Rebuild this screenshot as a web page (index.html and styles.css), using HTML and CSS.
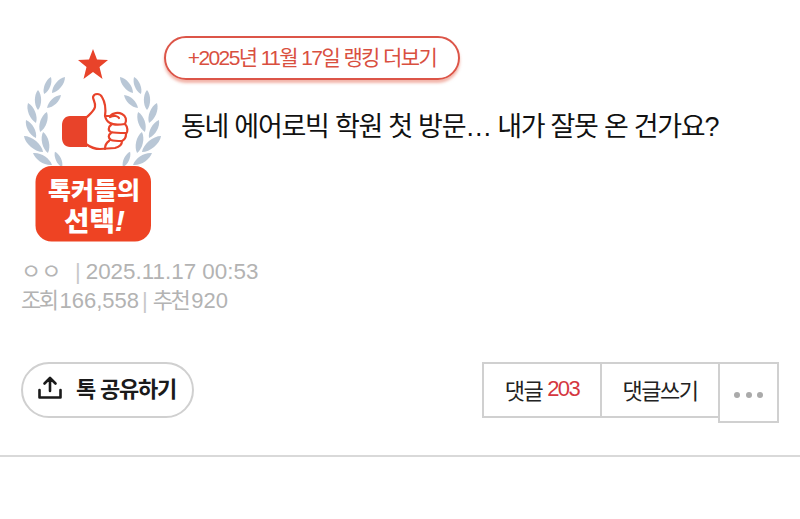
FILE: index.html
```html
<!DOCTYPE html>
<html lang="ko">
<head>
<meta charset="utf-8">
<title>동네 에어로빅 학원 첫 방문</title>
<link rel="stylesheet" href="styles.css">
</head>
<body>
<div class="page">
  <header class="head">
    <svg class="badge" viewBox="20 45 145 200" width="145" height="200">
      <defs>
        <path id="leaf" d="M0-1C.42-.5.42.5 0 1-.42.5-.42-.5 0-1Z"/>
        <g id="wreath" fill="#b9c7d6">
          <use href="#leaf" transform="translate(58.500 85) rotate(39) scale(10.300)"/>
          <use href="#leaf" transform="translate(47.500 85.500) rotate(22) scale(9.200)"/>
          <use href="#leaf" transform="translate(54 101.500) rotate(47) scale(9.500)"/>
          <use href="#leaf" transform="translate(38 100) scale(10)"/>
          <use href="#leaf" transform="translate(43.500 122) rotate(19) scale(10.500)"/>
          <use href="#leaf" transform="translate(32 113) rotate(-22) scale(10.700)"/>
          <use href="#leaf" transform="translate(45.500 142.500) rotate(-13) scale(10.800)"/>
          <use href="#leaf" transform="translate(31 129) rotate(-29) scale(10.300)"/>
          <use href="#leaf" transform="translate(33.500 144) rotate(-50) scale(12.500)"/>
          <use href="#leaf" transform="translate(42.500 159) rotate(-58) scale(11.200)"/>
          <use href="#leaf" transform="translate(58.500 159.500) rotate(-25) scale(8.500)"/>
        </g>
      </defs>
      <use href="#wreath"/>
      <use href="#wreath" transform="translate(185 0) scale(-1 1)"/>
      <polygon fill="#e8432a" points="93,49 97,59.500 108,60 99.500,67 102.500,79 93,72 83.500,79 86.500,67 78,60 89,59.500"/>
      <path fill="#e8432a" d="M87 116H70c-5 0-8 4-8 9v13c0 5 3 9 8 9h17z"/>
      <path fill="#fff" stroke="#e8432a" stroke-width="2.200" stroke-linejoin="round" d="M86 118C90 114 94 111 95 107 96 103 93 100 93 97 94 93 100 93 102 97 105 102 106 109 105 116H110C113 113 118 112 122 114 126 116 127 120 125 124 128 127 128 132 126 134 126 138 124 140 122 141 122 145 119 147 115 148L100 149C95 149 90 147 86 144Z"/>
      <path fill="none" stroke="#e8432a" stroke-width="2.200" stroke-linecap="round" d="M105 116C106 120 108 122 110 123 113 125 118 125 125 124M110 117C114 115 118 116 119 118M111 125C108 127 108 131 111 132 115 133 121 133 126 133M111 133C108 135 108 138 111 140 114 141 118 141 122 141M109 141C106 143 105 146 105 149"/>
      <rect x="35.500" y="166" width="115.500" height="75.500" rx="16" fill="#ee4323"/>
      <text class="badge-text" x="94" y="199" textLength="92" lengthAdjust="spacingAndGlyphs">톡커들의</text>
      <text class="badge-text badge-big" x="94.500" y="231" textLength="61" lengthAdjust="spacingAndGlyphs">선택<tspan class="bang">!</tspan></text>
    </svg>
    <div class="head-main">
      <a class="rank-pill">+2025년 11월 17일 랭킹 더보기</a>
      <h1 class="title">동네 에어로빅 학원 첫 방문… 내가 잘못 온 건가요?</h1>
    </div>
  </header>

  <section class="meta">
    <div class="meta-row"><span class="author">ㅇㅇ</span><span class="sep date-sep">|</span><span class="date">2025.11.17 00:53</span></div>
    <div class="meta-row"><span class="lbl">조회</span><span>166,558</span><span class="sep stat-sep">|</span><span class="lbl">추천</span><span>920</span></div>
  </section>

  <div class="actions">
    <button class="share">
      <svg class="share-icon" viewBox="0 0 26 26" width="26" height="26">
        <path d="M13 16V3.500M7.500 8.500 13 3l5.500 5.500M2.500 15v7.500h21V15" fill="none" stroke="#1a1a1a" stroke-width="2.600" stroke-linecap="round" stroke-linejoin="round"/>
      </svg>
      <span class="share-label">톡 공유하기</span>
    </button>
    <div class="btns">
      <a class="btn">댓글 <em>203</em></a>
      <a class="btn btn-write">댓글쓰기</a>
      <a class="btn-more"><i></i><i></i><i></i></a>
    </div>
  </div>
  <hr class="rule">
</div>
</body>
</html>
```

FILE: styles.css
```css
* { box-sizing: border-box; }
html, body { margin: 0; padding: 0; background: #fff; }
body {
  font-family: "Liberation Sans", "Noto Sans CJK KR", sans-serif;
  width: 800px;
  height: 519px;
  overflow: hidden;
}
.page { padding-top: 36px; }
.head { display: flex; height: 206px; padding-left: 20px; }
.badge { display: block; margin-top: 9px; flex: none; }
.badge-text {
  font-family: "Noto Sans CJK KR", sans-serif;
  font-weight: 900;
  font-size: 24px;
  fill: #fff;
  text-anchor: middle;
}
.badge-big { font-size: 27px; }
.bang { font-style: italic; font-size: 30px; font-family: "Liberation Sans", sans-serif; }
.head-main { margin-left: -1px; display: flex; flex-direction: column; align-items: flex-start; }
.rank-pill {
  display: flex;
  align-items: center;
  justify-content: center;
  width: 296px;
  height: 44px;
  padding-bottom: 5px;
  border: 2px solid #dc5548;
  border-radius: 22px;
  box-shadow: 0 3px 3px rgba(232, 120, 100, .55);
  color: #d9503f;
  font-size: 21px;
  letter-spacing: -1.600px;
  white-space: nowrap;
}
.title {
  margin: 28px 0 0 17px;
  font-size: 27px;
  font-weight: 400;
  line-height: 38px;
  letter-spacing: -1.270px;
  color: #111;
  white-space: nowrap;
}
.meta { padding-left: 21px; color: #b3b3b3; font-size: 22px; line-height: 29px; margin-top: 15px; }
.meta-row { display: flex; gap: 3px; white-space: nowrap; }
.author { color: #b5b5b5; width: 47px; }
.date-sep { margin-left: 4px; margin-right: 2px; }
.date { font-size: 22.400px; }
.sep { font-weight: 400; color: #c8c8c8; }
.stat-sep { margin-right: 2px; }
.lbl { letter-spacing: -2.500px; }
.actions { display: flex; justify-content: space-between; align-items: flex-start; margin-top: 47px; padding: 0 21px; }
.share {
  display: flex;
  align-items: center;
  gap: 13px;
  width: 173px;
  height: 56px;
  padding: 0 0 4px 14px;
  border: 2px solid #d0d0d0;
  border-radius: 28px;
  background: #fff;
  font: inherit;
  font-size: 22px;
  font-weight: 700;
  letter-spacing: -1.200px;
  color: #1a1a1a;
}
.share-icon { display: block; flex: none; }
.share-label { padding-bottom: 3px; }
.btns { display: flex; align-items: flex-start; }
.btn {
  display: flex;
  align-items: center;
  justify-content: center;
  gap: 5px;
  width: 120px;
  height: 56px;
  padding-bottom: 3px;
  margin-right: -2px;
  border: 2px solid #d0d0d0;
  font-size: 22px;
  letter-spacing: -1.500px;
  color: #222;
  white-space: nowrap;
}
.btn em { font-style: normal; color: #d5373f; }
.btn-write { width: 120px; }
.btn-more {
  display: flex;
  align-items: center;
  justify-content: center;
  gap: 5.500px;
  width: 61px;
  height: 61px;
  padding-top: 4px;
  border: 2px solid #d0d0d0;
  background: #fff;
}
.btn-more i { width: 6px; height: 6px; border-radius: 50%; background: #aaa; }
.rule { margin: 32px 0 0; border: 0; border-top: 2px solid #d9d9d9; }
```
